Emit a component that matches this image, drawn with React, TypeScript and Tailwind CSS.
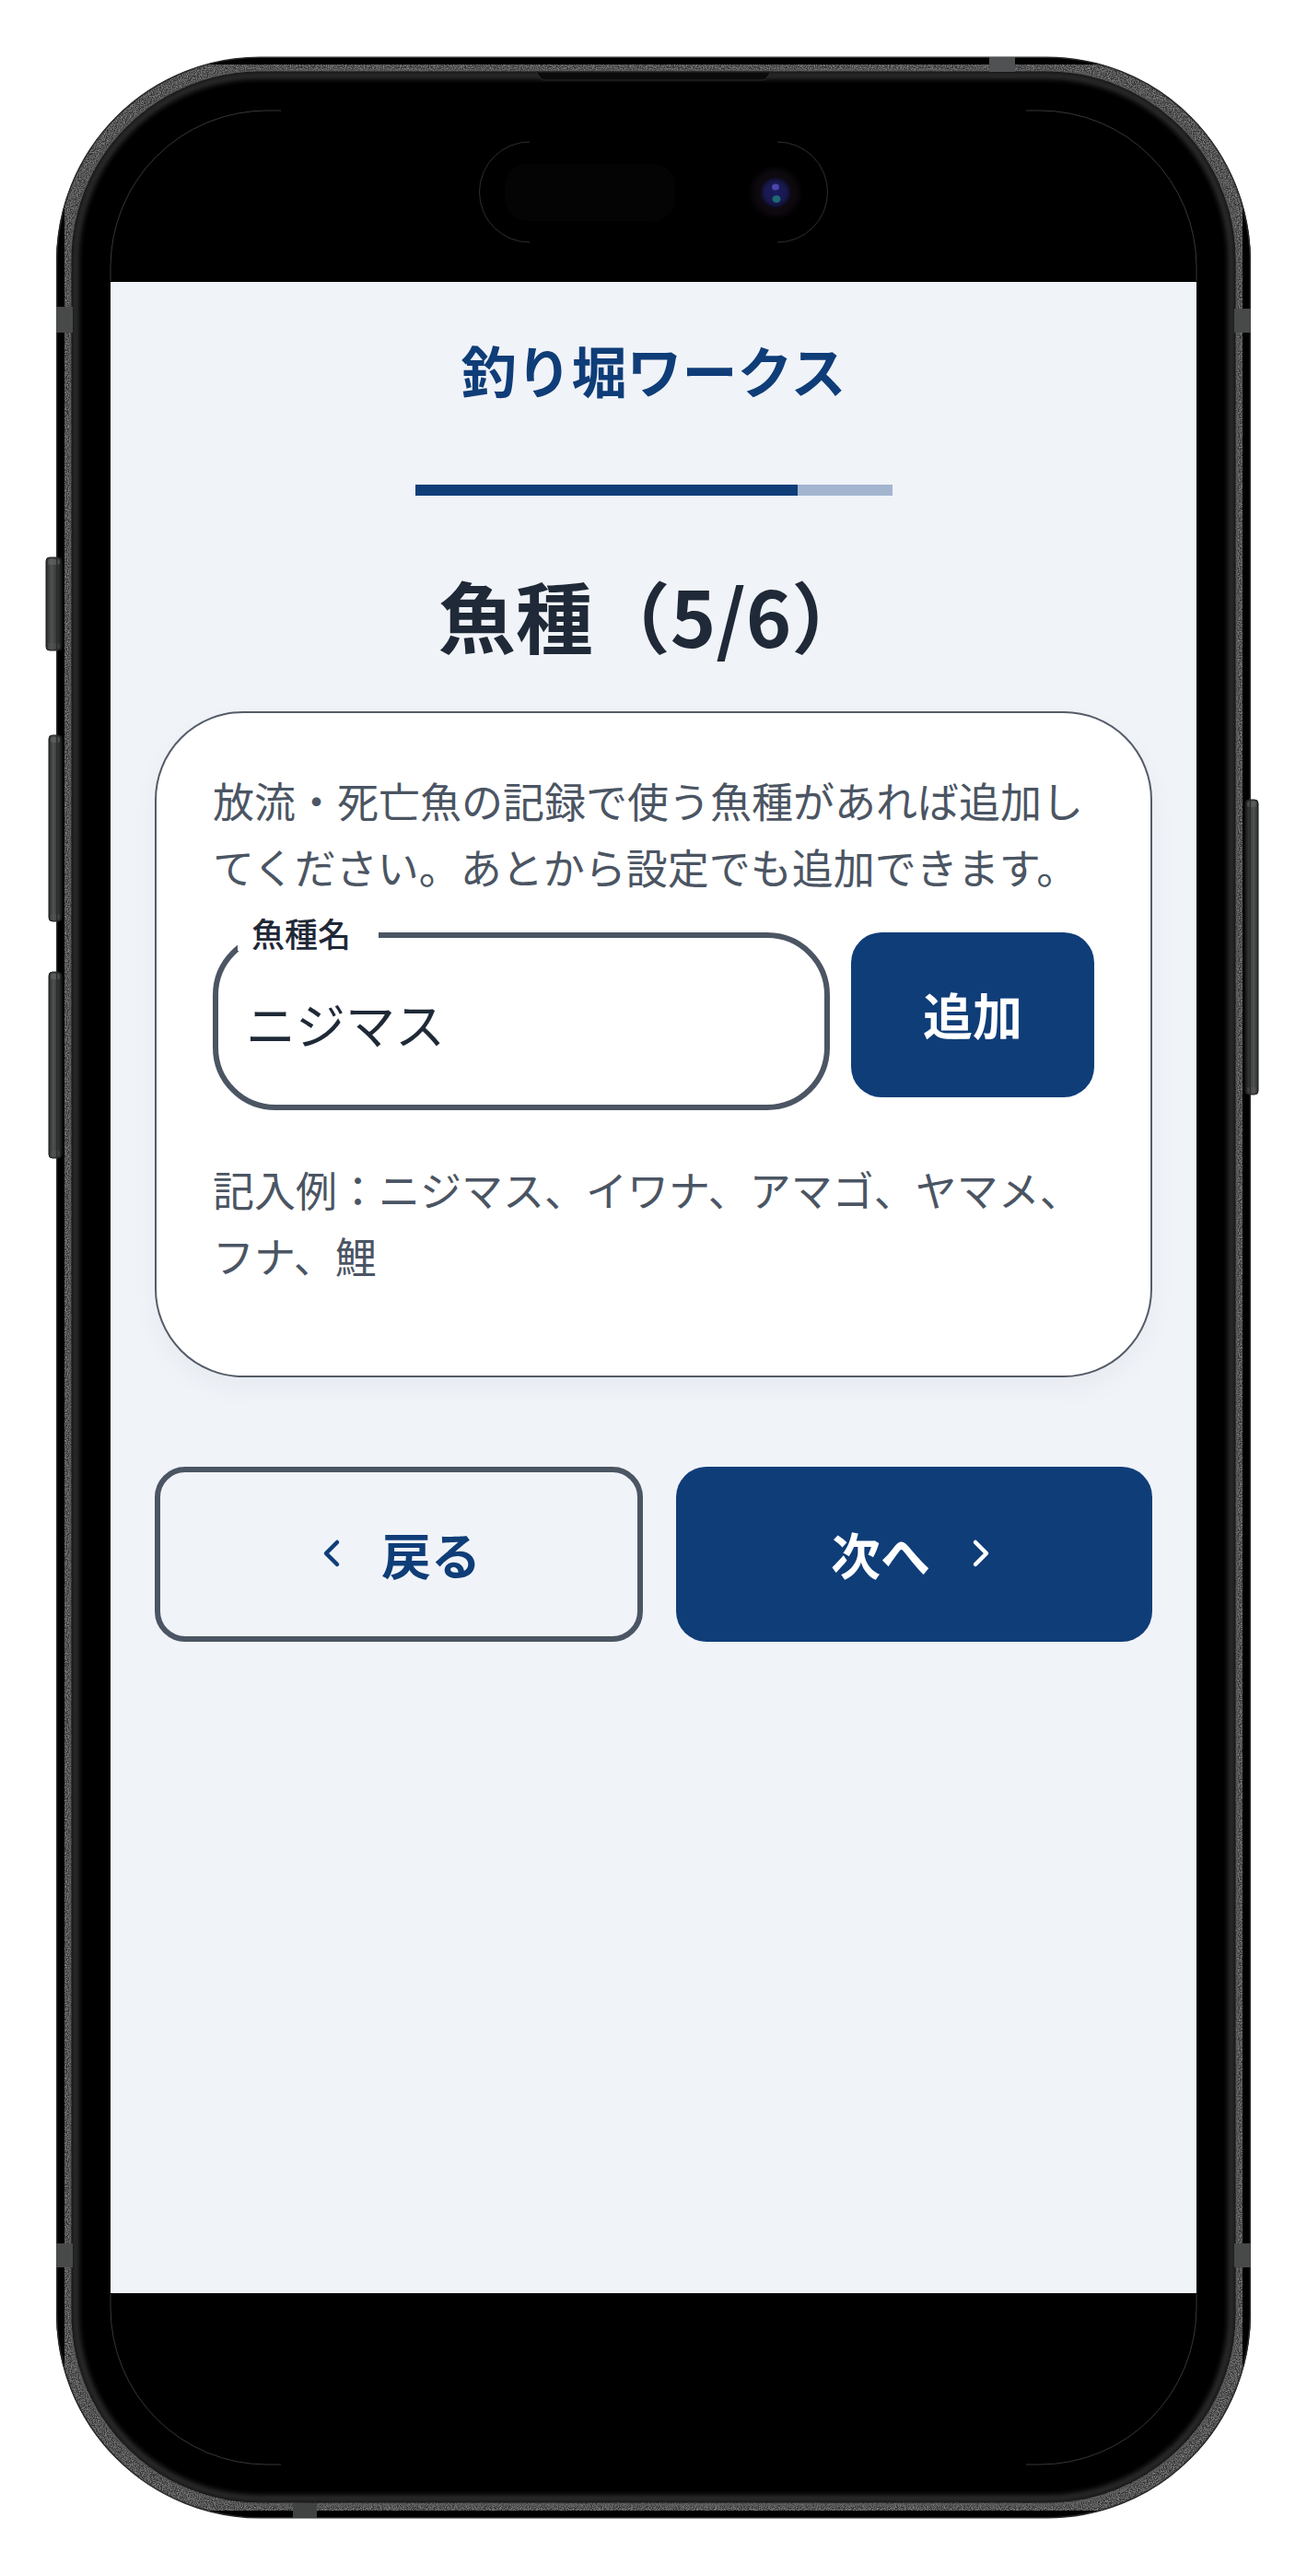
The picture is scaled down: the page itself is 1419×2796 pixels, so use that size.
import React from "react";
import { ChevronLeft, ChevronRight } from "lucide-react";

const FONT = "font-['Noto_Sans_CJK_JP','Noto_Sans',sans-serif]";

function SideButton({ x, y, w, h }: { x: number; y: number; w: number; h: number }) {
  return (
    <g>
      <rect x={x} y={y} width={w + 6} height={h} rx={4} fill="url(#btn)" stroke="#1b1c1c" strokeWidth={1} />
      <rect x={x + 2} y={y + 2} width={w + 2} height={6} rx={2} fill="#6a6b6b" opacity={0.5} />
      <rect x={x + 2} y={y + h - 8} width={w + 2} height={6} rx={2} fill="#5a5b5b" opacity={0.4} />
    </g>
  );
}

function cornerArcs(l: number, t: number, r: number, b: number, rad: number, reach: number) {
  return [
    `M${l} ${t + reach}V${t + rad}A${rad} ${rad} 0 0 1 ${l + rad} ${t}H${l + reach}`,
    `M${r} ${t + reach}V${t + rad}A${rad} ${rad} 0 0 0 ${r - rad} ${t}H${r - reach}`,
    `M${l} ${b - reach}V${b - rad}A${rad} ${rad} 0 0 0 ${l + rad} ${b}H${l + reach}`,
    `M${r} ${b - reach}V${b - rad}A${rad} ${rad} 0 0 1 ${r - rad} ${b}H${r - reach}`,
  ].join("");
}

function PhoneFrame() {
  return (
    <svg className="absolute left-0 top-0" width={1419} height={2796} viewBox="0 0 1419 2796" fill="none">
      <defs>
        <linearGradient id="btn" x1="0" x2="1" y1="0" y2="0">
          <stop offset="0" stopColor="#2a2b2b" />
          <stop offset="0.35" stopColor="#505152" />
          <stop offset="0.8" stopColor="#2c2d2d" />
          <stop offset="1" stopColor="#161717" />
        </linearGradient>
        <filter id="grain" x="0" y="0" width="100%" height="100%" filterUnits="objectBoundingBox">
          <feTurbulence type="fractalNoise" baseFrequency="0.9" numOctaves="2" seed="4" result="t" />
          <feColorMatrix
            in="t"
            type="matrix"
            values="0 0 0 0 0.5  0 0 0 0 0.5  0 0 0 0 0.5  0 0 0 1.1 -0.42"
            result="n"
          />
          <feComposite in="n" in2="SourceAlpha" operator="in" result="g" />
          <feMerge>
            <feMergeNode in="SourceGraphic" />
            <feMergeNode in="g" />
          </feMerge>
        </filter>
        <filter id="soft" x="-5%" y="-5%" width="110%" height="110%">
          <feGaussianBlur stdDeviation="3" />
        </filter>
        <radialGradient id="lens">
          <stop offset="0" stopColor="#1a1a5e" />
          <stop offset="0.7" stopColor="#191950" />
          <stop offset="1" stopColor="#0e0e2a" />
        </radialGradient>
        <radialGradient id="halo">
          <stop offset="0" stopColor="#140f1c" />
          <stop offset="0.75" stopColor="#0c080d" />
          <stop offset="1" stopColor="#000000" />
        </radialGradient>
      </defs>

      <SideButton x={50} y={605} w={11} h={101} />
      <SideButton x={53} y={798} w={8} h={202} />
      <SideButton x={53} y={1055} w={8} h={202} />
      <g transform="translate(1419 0) scale(-1 1)">
        <SideButton x={53} y={868} w={8} h={320} />
      </g>

      <rect x={70} y={70.5} width={1279} height={2654} rx={213} stroke="#343535" strokeWidth={17} filter="url(#grain)" />
      <rect x={61.75} y={62.25} width={1295.5} height={2670.5} rx={221} stroke="#2b2c2c" strokeWidth={1.5} />
      <rect x={76} y={76.5} width={1267} height={2642} rx={207} stroke="#5c5d5d" strokeWidth={2} opacity={0.45} />
      <rect x={78.5} y={78.5} width={1262} height={2637} rx={204} stroke="#050505" strokeWidth={2} />
      <rect x={82} y={82} width={1255} height={2630} rx={200} stroke="#444444" strokeWidth={5} filter="url(#soft)" />

      <rect x={1074} y={62} width={28} height={16} fill="#505152" />
      <rect x={318} y={2717} width={26} height={16} fill="#414242" />
      <rect x={61} y={333} width={18} height={28} fill="#484949" />
      <rect x={1340} y={335} width={18} height={26} fill="#484949" />
      <rect x={61} y={2435} width={18} height={26} fill="#484949" />
      <rect x={1340} y={2435} width={18} height={26} fill="#484949" />

      <path d="M582 78H837L832 85Q831 87 828 87H591Q588 87 587 85Z" fill="#0b0b0b" stroke="#2a2a2a" strokeWidth={1} />

      <path d={cornerArcs(120, 120, 1299, 2675, 170, 185)} stroke="#4a4a4a" strokeWidth={0.75} />

      <path
        d="M575 154A54.5 54.5 0 0 0 575 263M844 154A54.5 54.5 0 0 1 844 263"
        stroke="#3f3f3f"
        strokeWidth={0.75}
      />
      <rect x={548} y={178} width={185} height={62} rx={24} fill="#040404" />
      <circle cx={842} cy={209} r={30} fill="url(#halo)" />
      <circle cx={842} cy={209} r={16} fill="url(#lens)" />
      <ellipse cx={842} cy={203} rx={4} ry={3.5} fill="#4a45a8" />
      <ellipse cx={843} cy={216} rx={4.5} ry={4} fill="#1d6a72" />
    </svg>
  );
}

export default function App() {
  return (
    <div className={`relative w-[1419px] h-[2796px] bg-white overflow-hidden pt-[62px] pl-[61px] ${FONT}`}>
      <div className="w-[1297px] h-[2671px] rounded-[222px] bg-black px-[59px] py-[244px]">
        <main className="relative z-20 flex h-full w-full flex-col items-center bg-[#f0f3f8] px-[48px] pt-[53px]">
          <h1 className="text-[60px] leading-[84px] font-bold text-[#0f3d78]">釣り堀ワークス</h1>

          <div className="mt-[83px] h-[12px] w-[518px] bg-[#a3b5cf]">
            <div className="h-full w-[415px] bg-[#0f3d78]" />
          </div>

          <h2 className="mt-[73px] text-[84px] leading-[112px] font-bold text-[#1f2937]">魚種（5/6）</h2>

          <section className="mt-[49px] h-[723px] w-full rounded-[96px] border-2 border-[#555c68] bg-white px-[61px] pt-[59px] shadow-[0_12px_30px_rgba(15,40,80,0.04)]">
            <p className="text-[45px] leading-[72px] text-[#4b5563]">
              放流・死亡魚の記録で使う魚種があれば追加してください。あとから設定でも追加できます。
            </p>

            <div className="mt-[35px] flex items-start gap-[23px]">
              <div className="relative w-[670px]">
                <span className="absolute left-[27px] top-[-20px] bg-white pl-[15px] pr-[30px] text-[36px] leading-[40px] font-medium text-[#1f2937]">
                  魚種名
                </span>
                <input
                  readOnly
                  value="ニジマス"
                  className="block h-[193px] w-full rounded-[68px] border-[6px] border-[#4b5563] bg-white px-[30px] pt-[4px] text-[54px] text-[#1f2937] outline-none"
                />
              </div>
              <button className="h-[179px] w-[264px] rounded-[33px] bg-[#0f3d78] pb-[3px] text-[54px] font-bold text-white">
                追加
              </button>
            </div>

            <p className="mt-[50px] text-[45px] leading-[72px] text-[#4b5563]">
              記入例：ニジマス、イワナ、アマゴ、ヤマメ、フナ、鯉
            </p>
          </section>

          <div className="mt-[97px] flex w-full justify-between">
            <button className="flex h-[190px] w-[530px] items-center justify-center gap-[30px] rounded-[33px] border-[6px] border-[#4b5563] pr-[8px] pb-[2px] text-[54px] font-bold text-[#0f3d78]">
              <ChevronLeft size={48} strokeWidth={2.25} />
              戻る
            </button>
            <button className="flex h-[190px] w-[517px] items-center justify-center gap-[31px] rounded-[33px] bg-[#0f3d78] pl-[6px] pb-[2px] text-[54px] font-bold text-white">
              次へ
              <ChevronRight size={48} strokeWidth={2.25} />
            </button>
          </div>
        </main>
      </div>
      <PhoneFrame />
    </div>
  );
}
